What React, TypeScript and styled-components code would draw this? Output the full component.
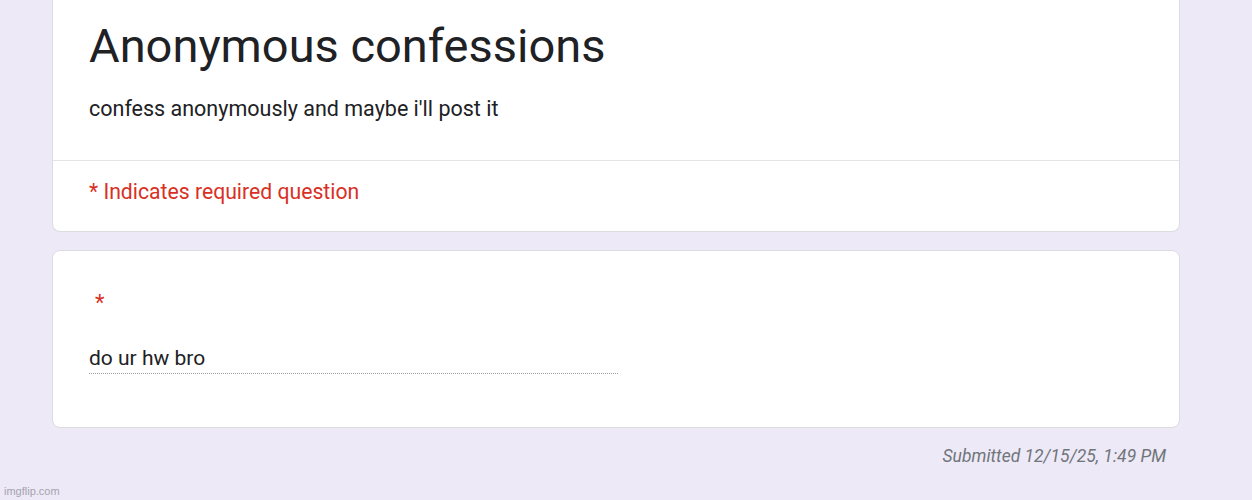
import React from "react";
import styled, { createGlobalStyle } from "styled-components";

const Global = createGlobalStyle`
  html, body { margin: 0; padding: 0; background: #ede9f7; }
  body { font-family: Roboto, "Liberation Sans", Arial, sans-serif; }
`;

const Page = styled.div`
  width: 1252px;
  height: 500px;
  background: #ede9f7;
  position: relative;
  overflow: hidden;
  display: flex;
  flex-direction: column;
  padding: 0 72px 0 52px;
  box-sizing: border-box;
`;

const Card = styled.div<{ $flushTop?: boolean }>`
  background: #fff;
  border: 1px solid #dadce0;
  border-top: ${(p) => (p.$flushTop ? "none" : "1px solid #dadce0")};
  border-radius: ${(p) => (p.$flushTop ? "0 0 8px 8px" : "8px")};
  box-sizing: border-box;
`;

const Header = styled.div`
  padding: 16px 36px 0 36px;
  height: 161px;
  box-sizing: border-box;
  border-bottom: 1px solid #e4e4e8;
`;

const Title = styled.h1`
  margin: 0;
  font-family: Roboto, sans-serif;
  font-weight: 400;
  font-size: 47px;
  line-height: 60px;
  color: #202124;
`;

const Description = styled.p`
  margin: 19px 0 0 0;
  font-size: 21.5px;
  line-height: 28px;
  color: #202124;
`;

const Required = styled.div`
  padding: 16px 36px 0 36px;
  height: 70px;
  box-sizing: border-box;
  font-size: 21.2px;
  line-height: 30px;
  color: #d93025;
`;

const Question = styled(Card)`
  margin-top: 18px;
  height: 178px;
  padding: 40px 36px 0 36px;
`;

const Asterisk = styled.div`
  color: #d93025;
  font-size: 22px;
  line-height: 24px;
  padding-left: 6px;
`;

const Answer = styled.div`
  margin-top: 30px;
  width: 529px;
  font-family: Roboto, sans-serif;
  font-size: 21px;
  line-height: 26px;
  color: #202124;
  padding-bottom: 2px;
  border-bottom: 1px dotted #9aa0a6;
`;

const Submitted = styled.div`
  align-self: flex-end;
  margin-top: 16px;
  margin-right: 14px;
  font-style: italic;
  font-size: 17.5px;
  line-height: 24px;
  color: #70757a;
`;

const Watermark = styled.div`
  position: absolute;
  left: 4px;
  bottom: 3px;
  font-family: "Liberation Sans", Arial, sans-serif;
  font-size: 11px;
  color: #a5a3ad;
`;

export default function App() {
  return (
    <>
      <Global />
      <Page>
        <Card $flushTop>
          <Header>
            <Title>Anonymous confessions</Title>
            <Description>confess anonymously and maybe i'll post it</Description>
          </Header>
          <Required>* Indicates required question</Required>
        </Card>
        <Question>
          <Asterisk>*</Asterisk>
          <Answer>do ur hw bro</Answer>
        </Question>
        <Submitted>Submitted 12/15/25, 1:49 PM</Submitted>
        <Watermark>imgflip.com</Watermark>
      </Page>
    </>
  );
}
